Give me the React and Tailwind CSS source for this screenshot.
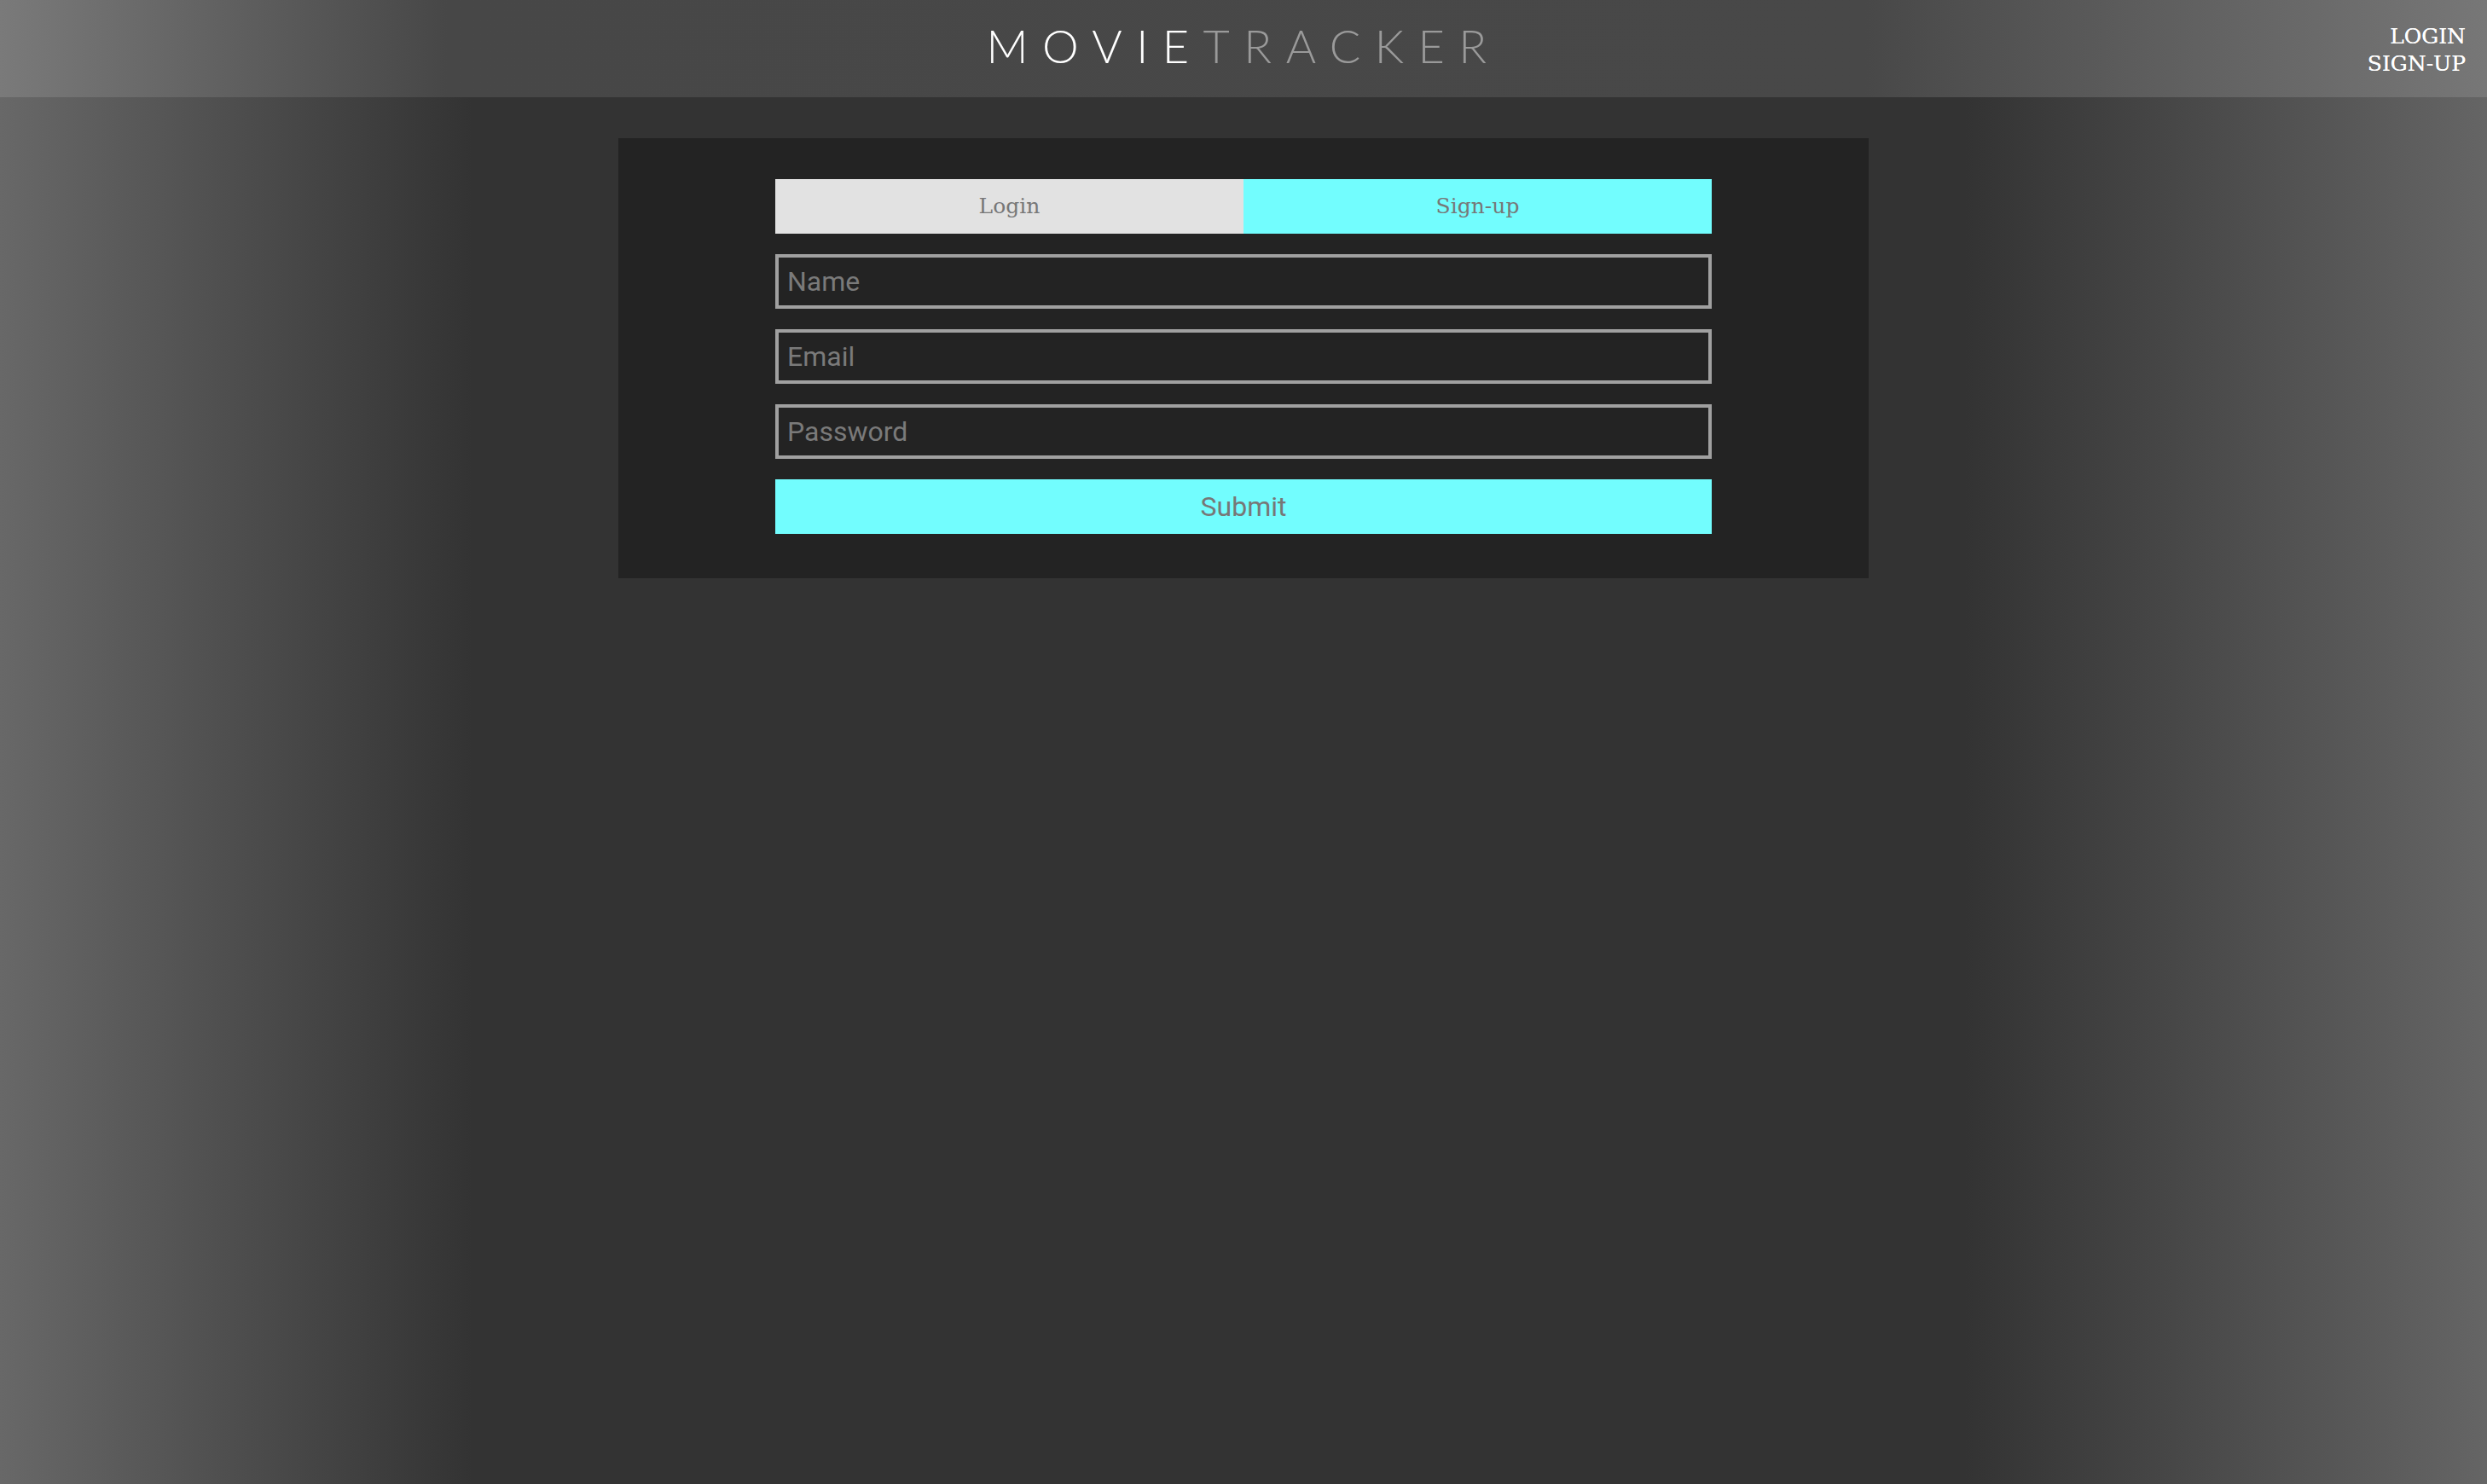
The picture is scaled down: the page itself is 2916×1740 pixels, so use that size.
import React from 'react'

const SLAB = { fontFamily: '"DejaVu Serif", "Liberation Serif", serif' }

function Header() {
  return (
    <header className="flex h-[114px] items-center justify-between bg-[linear-gradient(to_right,#7a7a7a,#474747_18%,#484848_75%,#777777)] px-[25px]">
      <div className="w-[200px]" />
      <h1 className="-mt-[6px] font-['Lato',_sans-serif] text-[54px] font-light leading-none tracking-[16.5px]">
        <span className="text-white">MOVIE</span>
        <span className="text-[#9a9a9a]">TRACKER</span>
      </h1>
      <nav className="mt-[4px] flex w-[200px] flex-col items-end font-['DejaVu_Serif',serif] text-[25px] leading-[32px] text-white [text-shadow:0_0_0.4px_#fff]">
        <a href="#login">LOGIN</a>
        <a href="#signup">SIGN-UP</a>
      </nav>
    </header>
  )
}

function Field({ placeholder, type = 'text' }) {
  return (
    <input
      type={type}
      placeholder={placeholder}
      className="h-[64px] w-full border-4 border-[#a0a0a0] bg-transparent px-[10px] font-['Roboto',sans-serif] text-[32px] text-white outline-none placeholder:text-[#7a7a7a]"
    />
  )
}

export default function App() {
  return (
    <div className="min-h-screen bg-[linear-gradient(to_right,#686868,#333333_19%,#333333_79%,#656565)]">
      <Header />
      <main className="flex justify-center pt-[48px]">
        <section className="w-[1466px] bg-[#232323] pb-[52px] pt-[48px]">
          <div className="mx-auto flex w-[1098px] flex-col gap-[24px]">
            <div className="flex h-[64px] text-[25px] text-[#777777] [text-shadow:0_0_0.4px_#777]" style={SLAB}>
              <button type="button" className="flex flex-1 items-center justify-center bg-[#e2e2e2]">
                Login
              </button>
              <button type="button" className="flex flex-1 items-center justify-center bg-[#72fdfe]">
                Sign-up
              </button>
            </div>
            <Field placeholder="Name" />
            <Field placeholder="Email" type="email" />
            <Field placeholder="Password" type="password" />
            <button
              type="submit"
              className="h-[64px] w-full bg-[#72fdfe] font-['Roboto',sans-serif] text-[32px] text-[#777777]"
            >
              Submit
            </button>
          </div>
        </section>
      </main>
    </div>
  )
}
